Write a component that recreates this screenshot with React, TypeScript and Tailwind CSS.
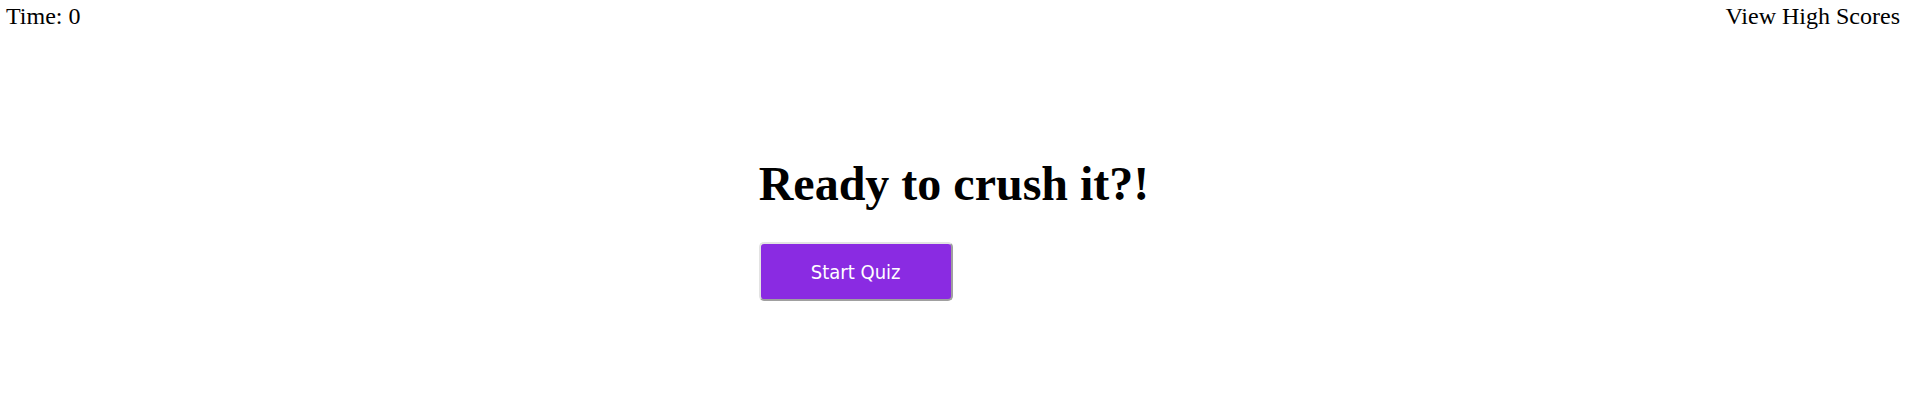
export default function App() {
  return (
    <div className="min-h-[405px] bg-white text-black font-['Liberation_Serif',serif]">
      <header className="flex items-start justify-between pl-[6px] pr-2 text-2xl">
        <div>Time: 0</div>
        <div>View High Scores</div>
      </header>
      <main className="flex justify-center">
        <div className="flex flex-col items-start mt-[125px]">
          <h1 className="text-5xl font-bold leading-[1.107]">
            Ready to crush it?!
          </h1>
          <button className="mt-8 w-[194px] h-[59px] bg-[#8a2be2] text-white text-xl rounded-[5px] border-2 border-t-[#e3e3e3] border-l-[#e3e3e3] border-r-[#a0a0a0] border-b-[#a0a0a0] font-['DejaVu_Sans_Condensed','DejaVu_Sans',sans-serif]">
            Start Quiz
          </button>
        </div>
      </main>
    </div>
  );
}
